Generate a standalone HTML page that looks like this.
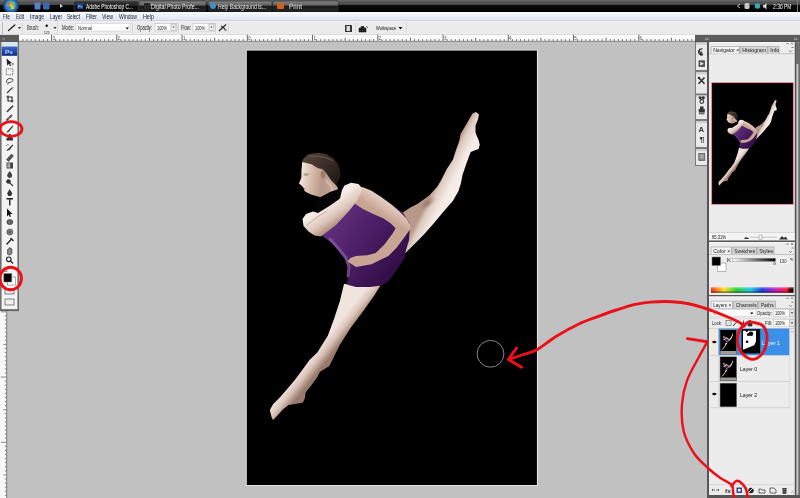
<!DOCTYPE html>
<html><head><meta charset="utf-8"><style>html,body{margin:0;padding:0;width:800px;height:498px;overflow:hidden;background:#c1c1c1}</style></head>
<body><svg width="800" height="498" viewBox="0 0 800 498" font-family="'Liberation Sans', sans-serif" style="position:absolute;left:0;top:0;display:block;will-change:transform;filter:blur(0.4px)"><defs>
<linearGradient id="gLegU" gradientUnits="userSpaceOnUse" x1="449" y1="157.5" x2="462.5" y2="164.3">
<stop offset="0" stop-color="#b8988a"/><stop offset="0.3" stop-color="#dccabe"/><stop offset="0.7" stop-color="#ecdfd8"/><stop offset="1" stop-color="#f6ede8"/>
</linearGradient>
<linearGradient id="gLegL" gradientUnits="userSpaceOnUse" x1="327.8" y1="335.8" x2="339.5" y2="345.2">
<stop offset="0" stop-color="#f0e4de"/><stop offset="0.45" stop-color="#dcc6bc"/><stop offset="1" stop-color="#9a7a6c"/>
</linearGradient>
<linearGradient id="gPur" gradientUnits="userSpaceOnUse" x1="330" y1="220" x2="400" y2="270">
<stop offset="0" stop-color="#62307e"/><stop offset="0.45" stop-color="#4c1e66"/><stop offset="1" stop-color="#300c44"/>
</linearGradient>
<linearGradient id="gArm" gradientUnits="userSpaceOnUse" x1="322" y1="208" x2="336" y2="228">
<stop offset="0" stop-color="#f6ece6"/><stop offset="0.55" stop-color="#dcc4b8"/><stop offset="1" stop-color="#a8806e"/>
</linearGradient>
<linearGradient id="gArmR" gradientUnits="userSpaceOnUse" x1="360" y1="200" x2="370" y2="185">
<stop offset="0" stop-color="#c8a494"/><stop offset="1" stop-color="#ecdcd2"/>
</linearGradient>
<linearGradient id="gHair" gradientUnits="userSpaceOnUse" x1="305" y1="155" x2="340" y2="180">
<stop offset="0" stop-color="#54443a"/><stop offset="0.5" stop-color="#3c2e28"/><stop offset="1" stop-color="#201814"/>
</linearGradient>
<linearGradient id="gFace" gradientUnits="userSpaceOnUse" x1="300" y1="175" x2="338" y2="180">
<stop offset="0" stop-color="#f4e8e0"/><stop offset="0.3" stop-color="#d8bcac"/><stop offset="0.6" stop-color="#b89888"/><stop offset="1" stop-color="#c8aa9a"/>
</linearGradient>
<radialGradient id="gShade" cx="0.5" cy="0.5" r="0.5"><stop offset="0" stop-color="#7a5040" stop-opacity="0.55"/><stop offset="1" stop-color="#7a5040" stop-opacity="0"/></radialGradient>
<radialGradient id="gHi" cx="0.5" cy="0.5" r="0.5"><stop offset="0" stop-color="#9a6ab8" stop-opacity="0.7"/><stop offset="1" stop-color="#9a6ab8" stop-opacity="0"/></radialGradient>
<g id="dancer">
<!-- raised leg -->
<path fill="url(#gLegU)" d="M476,112 L479,114.5 L478,119.5 L475.5,125.5 L475.5,132.7 L478.6,140 L479.8,144.8 L478.6,149 L475,150.2 L470.7,152 L468.9,156.8 L465.9,165 L462.5,175 L461,183 L458.5,191 L452.8,200.9 L443.2,212.1 L433.6,223.4 L423.9,234.6 L414.3,244.3 L406.2,252.3 L401.4,255.5 L396,250 L392,232 L396,216 L402.8,212.5 L410,207.7 L417.7,203.8 L428.9,195.8 L437,187 L441,180.5 L446.6,169.3 L453,159.6 L456,150 L459.3,141.1 L460.5,133.9 L464.1,127.9 L468.3,120.7 L472.5,113.4 Z"/>
<ellipse cx="428" cy="203" rx="10" ry="4.5" transform="rotate(-40 428 203)" fill="url(#gShade)"/>
<!-- lower leg -->
<path fill="url(#gLegL)" d="M344,284 L339.9,301.1 L333.9,319.2 L327.8,335.8 L317.3,352.4 L309.5,360 L303,369.1 L295.2,379.6 L287.4,388.7 L279.6,397.8 L273,404.3 L269.8,410.2 L271.7,417.4 L273,420 L277,416 L282.8,409.5 L288.7,405 L296.5,403.7 L303,402.4 L305,397.8 L305.6,392.6 L310.8,386.1 L317.4,377 L320,371.7 L329.3,365.9 L339.9,344.8 L350.4,328.2 L364,310.1 L374.6,295.1 L381.3,284 Z"/>
<!-- torso purple -->
<path fill="url(#gPur)" d="M322,212 L336.5,197.9 L345,192 L357,189 L372,192 L390.8,204.1 L402.8,212.5 L410,224 L409,240 L405.2,253.1 L405.2,257.3 L396.8,270 L388.4,281.2 L381.3,285.4 L370.1,287 L356,287 L346.5,284.5 L349,276 L350,268 L347,262 L343,256 L338,250 L332,243 L323,236.5 L318,225 Z"/>
<path d="M330,239 L339,249 L346,258 L349,267 L348,276" stroke="#8a58a6" stroke-width="3" fill="none" opacity="0.75" stroke-linecap="round"/>
<!-- hair -->
<path fill="url(#gHair)" d="M302.2,162.5 L302.7,159.5 L308,154.6 L317.7,152.8 L326,154 L333.4,158.3 L338.2,164.3 L340.6,172.7 L339.4,180 L335.8,185 L331,180 L326,172.7 L322.5,169.1 L317.7,167.9 L311.7,164.3 Z"/>
<path d="M310,156.5 Q322,154.5 333,161" fill="none" stroke="#7a6a60" stroke-width="1.3" opacity="0.55"/>
<!-- face/neck -->
<path fill="url(#gFace)" d="M302.2,162 L311.7,164.3 L317.7,167.9 L322.5,169.1 L326,172.7 L331,180 L335.8,185 L337.6,187.2 L338.2,192 L322.5,198 L319,196.8 L311,194.4 L306.9,192.6 L304.5,191 L303.9,188.4 L302,186 L299,183.5 L301.4,177.5 L301.4,171.5 Z"/>
<ellipse cx="323" cy="174.5" rx="2.3" ry="4.3" fill="#9a7464" opacity="0.75"/>
<ellipse cx="306" cy="174.5" rx="2.6" ry="1.2" fill="#7a5a4a" opacity="0.5"/>
<path d="M303.8,188.6 h2" stroke="#9a6a60" stroke-width="0.9" opacity="0.6"/>
<path d="M326,180 L331,186 L333,192" fill="none" stroke="#e6d2c6" stroke-width="3" opacity="0.45"/>
<!-- right arm (bent, hand on hip) -->
<path fill="url(#gArmR)" d="M354.6,187.2 L363,187.2 L371.5,190.8 L381.1,196.9 L390.8,204.1 L399.2,211.3 L406.4,218.6 L410,224.6 L410.7,228.2 L405.2,236.2 L396.8,247.5 L388.4,255.9 L380,260.1 L371.5,264.3 L356,267.1 L347.6,261.5 L350.4,258 L356,255.9 L367.3,255.2 L375.7,253.1 L384.2,244.7 L392.6,233.4 L395.6,228.2 L390.8,223.4 L383.6,218.6 L372.7,213.7 L363,208.9 L355.2,204.1 Z"/>
<!-- collar -->
<path fill="#060406" d="M317,199 L330,192 L340,188.5 L347,190 L346,196 L331,205.5 L318,213.5 L313,207 Z"/>
<!-- left arm -->
<path fill="url(#gArm)" d="M321,236.5 L336,225 L349,211 L357,201 L361,193 L362,188 L358.5,184 L351,182.8 L344.5,185.5 L342,190 L340,198.5 L331,205 L318,213 L313,211.5 L306,214 L302.5,219 L303.5,226 L308.5,231.5 L314.5,235.5 Z"/>
<path d="M306,226 L316,218 L327,211" stroke="#b08878" stroke-width="1" fill="none" opacity="0.6"/>
</g>
</defs>
<rect x="0" y="0" width="800" height="498" fill="#c1c1c1" />
<linearGradient id="gTask" x1="0" y1="0" x2="0" y2="1"><stop offset="0" stop-color="#6c6c6c"/><stop offset="0.12" stop-color="#5a5a5a"/><stop offset="0.42" stop-color="#444"/><stop offset="0.46" stop-color="#0a0a0a"/><stop offset="1" stop-color="#000"/></linearGradient>
<linearGradient id="gBtn" x1="0" y1="0" x2="0" y2="1"><stop offset="0" stop-color="#8a8a8a"/><stop offset="0.4" stop-color="#5e5e5e"/><stop offset="0.5" stop-color="#1a1a1a"/><stop offset="1" stop-color="#262626"/></linearGradient>
<linearGradient id="gAct" x1="0" y1="0" x2="0" y2="1"><stop offset="0" stop-color="#3a3a3a"/><stop offset="0.45" stop-color="#222"/><stop offset="0.5" stop-color="#0c0c0c"/><stop offset="1" stop-color="#111"/></linearGradient>
<rect x="0" y="0" width="800" height="12" fill="url(#gTask)" />
<radialGradient id="gOrb" cx="0.5" cy="0.45" r="0.55"><stop offset="0" stop-color="#f3f3f3"/><stop offset="0.25" stop-color="#8fc850"/><stop offset="0.5" stop-color="#3a8fd8"/><stop offset="0.8" stop-color="#1c4c80"/><stop offset="1" stop-color="#0a1a30"/></radialGradient>
<circle cx="11" cy="6" r="8" fill="url(#gOrb)"/>
<rect x="7.5" y="2.5" width="3" height="3" fill="#e8682a"/><rect x="11.1" y="2.5" width="3" height="3" fill="#7cc040"/><rect x="7.5" y="6.1" width="3" height="3" fill="#2a90e0"/><rect x="11.1" y="6.1" width="3" height="3" fill="#f0c020"/>
<rect x="34.5" y="2.5" width="6" height="7" fill="#5a80c8" rx="1"/>
<rect x="43" y="2.5" width="6.5" height="7" fill="#3c68b0" rx="1"/>
<path d="M60,4 L63,6 L60,8 Z" fill="#ccc"/>
<rect x="74" y="1" width="64.5" height="10.5" rx="1.5" fill="url(#gAct)" stroke="#555" stroke-width="0.6"/>
<rect x="139" y="1" width="67" height="10.5" rx="1.5" fill="url(#gBtn)" stroke="#222" stroke-width="0.6"/>
<rect x="208" y="1" width="64" height="10.5" rx="1.5" fill="url(#gBtn)" stroke="#222" stroke-width="0.6"/>
<rect x="272.5" y="1" width="66" height="10.5" rx="1.5" fill="url(#gBtn)" stroke="#222" stroke-width="0.6"/>
<rect x="77" y="3" width="6" height="6" fill="#1b3f8f" />
<text x="78.2" y="7.6" font-size="3.6" fill="#9cc8ff" font-weight="bold" text-anchor="start">Ps</text>
<rect x="144" y="3" width="6" height="6" fill="#2a2a2a" />
<circle cx="213" cy="6" r="3" fill="#3a90d0"/>
<rect x="277" y="3" width="7" height="6" fill="#d0601e" rx="1"/>
<text x="86" y="8.6" font-size="6.3" fill="#fff" font-weight="normal" text-anchor="start" textLength="47" lengthAdjust="spacingAndGlyphs">Adobe Photoshop C...</text>
<text x="151" y="8.6" font-size="6.3" fill="#eee" font-weight="normal" text-anchor="start" textLength="48" lengthAdjust="spacingAndGlyphs">Digital Photo Profe...</text>
<text x="218" y="8.6" font-size="6.3" fill="#eee" font-weight="normal" text-anchor="start" textLength="48" lengthAdjust="spacingAndGlyphs">Help Background is...</text>
<text x="289" y="8.6" font-size="6.3" fill="#eee" font-weight="normal" text-anchor="start" textLength="13" lengthAdjust="spacingAndGlyphs">Print</text>
<path d="M740,4 L737.5,6 L740,8" stroke="#ddd" stroke-width="0.9" fill="none"/>
<rect x="744.5" y="3" width="5" height="6" fill="#c8c8c8" rx="1.5"/>
<circle cx="757.5" cy="6" r="2.8" fill="#3aa8b0"/>
<path d="M763,5 h1.5 l2,-2 v6.5 l-2,-2 h-1.5 Z" fill="#ddd"/>
<text x="773" y="8.6" font-size="6.3" fill="#f4f4f4" font-weight="normal" text-anchor="start" textLength="18.5" lengthAdjust="spacingAndGlyphs">2:36 PM</text>
<rect x="797" y="0" width="1" height="12" fill="#777" />
<linearGradient id="gMenu" x1="0" y1="0" x2="0" y2="1"><stop offset="0" stop-color="#fafbfd"/><stop offset="1" stop-color="#dde2ee"/></linearGradient>
<rect x="0" y="12" width="800" height="8.8" fill="url(#gMenu)" />
<rect x="0" y="20.6" width="800" height="0.6" fill="#c4cadb" />
<text x="3" y="19" font-size="7" fill="#1a1a2a" font-weight="normal" text-anchor="start" textLength="7" lengthAdjust="spacingAndGlyphs">File</text>
<text x="16" y="19" font-size="7" fill="#1a1a2a" font-weight="normal" text-anchor="start" textLength="8" lengthAdjust="spacingAndGlyphs">Edit</text>
<text x="30" y="19" font-size="7" fill="#1a1a2a" font-weight="normal" text-anchor="start" textLength="14" lengthAdjust="spacingAndGlyphs">Image</text>
<text x="50" y="19" font-size="7" fill="#1a1a2a" font-weight="normal" text-anchor="start" textLength="12" lengthAdjust="spacingAndGlyphs">Layer</text>
<text x="67" y="19" font-size="7" fill="#1a1a2a" font-weight="normal" text-anchor="start" textLength="13" lengthAdjust="spacingAndGlyphs">Select</text>
<text x="86" y="19" font-size="7" fill="#1a1a2a" font-weight="normal" text-anchor="start" textLength="11" lengthAdjust="spacingAndGlyphs">Filter</text>
<text x="102" y="19" font-size="7" fill="#1a1a2a" font-weight="normal" text-anchor="start" textLength="11" lengthAdjust="spacingAndGlyphs">View</text>
<text x="119" y="19" font-size="7" fill="#1a1a2a" font-weight="normal" text-anchor="start" textLength="18" lengthAdjust="spacingAndGlyphs">Window</text>
<text x="143" y="19" font-size="7" fill="#1a1a2a" font-weight="normal" text-anchor="start" textLength="11" lengthAdjust="spacingAndGlyphs">Help</text>
<rect x="0" y="21.2" width="800" height="13.3" fill="#ebebeb" />
<rect x="0" y="21.2" width="800" height="0.6" fill="#fbfbfb" />
<rect x="2" y="22" width="1" height="12" fill="#b8b8b8" />
<rect x="22.5" y="22.5" width="0.8" height="11" fill="#c4c4c4" />
<rect x="23.3" y="22.5" width="0.6" height="11" fill="#fafafa" />
<rect x="57.5" y="22.5" width="0.8" height="11" fill="#c4c4c4" />
<rect x="58.3" y="22.5" width="0.6" height="11" fill="#fafafa" />
<rect x="132.5" y="22.5" width="0.8" height="11" fill="#c4c4c4" />
<rect x="133.3" y="22.5" width="0.6" height="11" fill="#fafafa" />
<rect x="178.5" y="22.5" width="0.8" height="11" fill="#c4c4c4" />
<rect x="179.3" y="22.5" width="0.6" height="11" fill="#fafafa" />
<rect x="215.5" y="22.5" width="0.8" height="11" fill="#c4c4c4" />
<rect x="216.3" y="22.5" width="0.6" height="11" fill="#fafafa" />
<rect x="228.5" y="22.5" width="0.8" height="11" fill="#c4c4c4" />
<rect x="229.3" y="22.5" width="0.6" height="11" fill="#fafafa" />
<rect x="355.5" y="22.5" width="0.8" height="11" fill="#c4c4c4" />
<rect x="356.3" y="22.5" width="0.6" height="11" fill="#fafafa" />
<rect x="406.5" y="22.5" width="0.8" height="11" fill="#c4c4c4" />
<rect x="407.3" y="22.5" width="0.6" height="11" fill="#fafafa" />
<path d="M8.5,30.5 L14.8,25" stroke="#222" stroke-width="1.3" stroke-linecap="round"/>
<path d="M18,27 h3 l-1.5,2 Z" fill="#222"/>
<text x="27" y="30" font-size="6.3" fill="#1a1a1a" font-weight="normal" text-anchor="start" textLength="12" lengthAdjust="spacingAndGlyphs">Brush:</text>
<circle cx="46.7" cy="25.8" r="1.2" fill="#111"/>
<text x="44" y="33.6" font-size="3.8" fill="#111" font-weight="normal" text-anchor="start" textLength="5.5" lengthAdjust="spacingAndGlyphs">125</text>
<path d="M53.5,27 h3 l-1.5,2 Z" fill="#222"/>
<text x="62" y="30" font-size="6.3" fill="#1a1a1a" font-weight="normal" text-anchor="start" textLength="12" lengthAdjust="spacingAndGlyphs">Mode:</text>
<rect x="76" y="23.5" width="54" height="7.5" fill="#fdfdfd" stroke="#c8c8c8" stroke-width="0.5"/>
<text x="78" y="29.5" font-size="5" fill="#1a1a1a" font-weight="normal" text-anchor="start" textLength="14" lengthAdjust="spacingAndGlyphs">Normal</text>
<path d="M125.5,27.5 h3.5 l-1.75,2 Z" fill="#111"/>
<text x="137" y="30" font-size="6.3" fill="#1a1a1a" font-weight="normal" text-anchor="start" textLength="15" lengthAdjust="spacingAndGlyphs">Opacity:</text>
<rect x="155" y="23.5" width="22" height="7.5" fill="#fdfdfd" stroke="#b8b8b8" stroke-width="0.5"/>
<text x="157" y="29.5" font-size="5" fill="#1a1a1a" font-weight="normal" text-anchor="start" textLength="10" lengthAdjust="spacingAndGlyphs">100%</text>
<rect x="171" y="24" width="5" height="6.5" fill="#f0f0f0" stroke="#999" stroke-width="0.5"/>
<path d="M172.5,26.5 h2 l-1,1.5 Z" fill="#333"/>
<text x="181" y="30" font-size="6.3" fill="#1a1a1a" font-weight="normal" text-anchor="start" textLength="10" lengthAdjust="spacingAndGlyphs">Flow:</text>
<rect x="193" y="23.5" width="22" height="7.5" fill="#fdfdfd" stroke="#b8b8b8" stroke-width="0.5"/>
<text x="195" y="29.5" font-size="5" fill="#1a1a1a" font-weight="normal" text-anchor="start" textLength="10" lengthAdjust="spacingAndGlyphs">100%</text>
<rect x="209" y="24" width="5" height="6.5" fill="#f0f0f0" stroke="#999" stroke-width="0.5"/>
<path d="M210.5,26.5 h2 l-1,1.5 Z" fill="#333"/>
<path d="M219,31 L226,24.5 M221,26 l4,3 M224.5,30 l2,0" stroke="#222" stroke-width="1.1"/>
<rect x="345" y="25" width="7" height="7" fill="#333" rx="0.5"/>
<rect x="346.5" y="26" width="3.5" height="5" fill="#ddd" />
<path d="M359,28 h7 v4 h-7 Z M361,26.5 h3 v1.5 h-3 Z M366,26 l2,2" fill="#222" stroke="#222" stroke-width="0.6"/>
<text x="376" y="30" font-size="5.6" fill="#111" font-weight="normal" text-anchor="start" textLength="20" lengthAdjust="spacingAndGlyphs">Workspace</text>
<path d="M398.5,27 h4 l-2,2.5 Z" fill="#111"/>
<rect x="19" y="34.8" width="676" height="6.6" fill="#fbfbfb" />
<rect x="19" y="40.8" width="676" height="0.9" fill="#777" />
<path d="M23.00,39.199999999999996V40.8M27.08,39.199999999999996V40.8M31.16,39.199999999999996V40.8M35.24,39.199999999999996V40.8M39.32,39.199999999999996V40.8M43.39,39.199999999999996V40.8M47.47,39.199999999999996V40.8M51.55,34.8V40.8M55.63,39.199999999999996V40.8M59.71,39.199999999999996V40.8M63.78,39.199999999999996V40.8M67.86,39.199999999999996V40.8M71.94,39.199999999999996V40.8M76.02,39.199999999999996V40.8M80.10,39.199999999999996V40.8M84.18,37.8V40.8M88.25,39.199999999999996V40.8M92.33,39.199999999999996V40.8M96.41,39.199999999999996V40.8M100.49,39.199999999999996V40.8M104.57,39.199999999999996V40.8M108.64,39.199999999999996V40.8M112.72,39.199999999999996V40.8M116.80,34.8V40.8M120.88,39.199999999999996V40.8M124.96,39.199999999999996V40.8M129.03,39.199999999999996V40.8M133.11,39.199999999999996V40.8M137.19,39.199999999999996V40.8M141.27,39.199999999999996V40.8M145.35,39.199999999999996V40.8M149.43,37.8V40.8M153.50,39.199999999999996V40.8M157.58,39.199999999999996V40.8M161.66,39.199999999999996V40.8M165.74,39.199999999999996V40.8M169.82,39.199999999999996V40.8M173.89,39.199999999999996V40.8M177.97,39.199999999999996V40.8M182.05,34.8V40.8M186.13,39.199999999999996V40.8M190.21,39.199999999999996V40.8M194.28,39.199999999999996V40.8M198.36,39.199999999999996V40.8M202.44,39.199999999999996V40.8M206.52,39.199999999999996V40.8M210.60,39.199999999999996V40.8M214.68,37.8V40.8M218.75,39.199999999999996V40.8M222.83,39.199999999999996V40.8M226.91,39.199999999999996V40.8M230.99,39.199999999999996V40.8M235.07,39.199999999999996V40.8M239.14,39.199999999999996V40.8M243.22,39.199999999999996V40.8M247.30,34.8V40.8M251.38,39.199999999999996V40.8M255.46,39.199999999999996V40.8M259.53,39.199999999999996V40.8M263.61,39.199999999999996V40.8M267.69,39.199999999999996V40.8M271.77,39.199999999999996V40.8M275.85,39.199999999999996V40.8M279.93,37.8V40.8M284.00,39.199999999999996V40.8M288.08,39.199999999999996V40.8M292.16,39.199999999999996V40.8M296.24,39.199999999999996V40.8M300.32,39.199999999999996V40.8M304.39,39.199999999999996V40.8M308.47,39.199999999999996V40.8M312.55,34.8V40.8M316.63,39.199999999999996V40.8M320.71,39.199999999999996V40.8M324.78,39.199999999999996V40.8M328.86,39.199999999999996V40.8M332.94,39.199999999999996V40.8M337.02,39.199999999999996V40.8M341.10,39.199999999999996V40.8M345.18,37.8V40.8M349.25,39.199999999999996V40.8M353.33,39.199999999999996V40.8M357.41,39.199999999999996V40.8M361.49,39.199999999999996V40.8M365.57,39.199999999999996V40.8M369.64,39.199999999999996V40.8M373.72,39.199999999999996V40.8M377.80,34.8V40.8M381.88,39.199999999999996V40.8M385.96,39.199999999999996V40.8M390.03,39.199999999999996V40.8M394.11,39.199999999999996V40.8M398.19,39.199999999999996V40.8M402.27,39.199999999999996V40.8M406.35,39.199999999999996V40.8M410.43,37.8V40.8M414.50,39.199999999999996V40.8M418.58,39.199999999999996V40.8M422.66,39.199999999999996V40.8M426.74,39.199999999999996V40.8M430.82,39.199999999999996V40.8M434.89,39.199999999999996V40.8M438.97,39.199999999999996V40.8M443.05,34.8V40.8M447.13,39.199999999999996V40.8M451.21,39.199999999999996V40.8M455.28,39.199999999999996V40.8M459.36,39.199999999999996V40.8M463.44,39.199999999999996V40.8M467.52,39.199999999999996V40.8M471.60,39.199999999999996V40.8M475.68,37.8V40.8M479.75,39.199999999999996V40.8M483.83,39.199999999999996V40.8M487.91,39.199999999999996V40.8M491.99,39.199999999999996V40.8M496.07,39.199999999999996V40.8M500.14,39.199999999999996V40.8M504.22,39.199999999999996V40.8M508.30,34.8V40.8M512.38,39.199999999999996V40.8M516.46,39.199999999999996V40.8M520.53,39.199999999999996V40.8M524.61,39.199999999999996V40.8M528.69,39.199999999999996V40.8M532.77,39.199999999999996V40.8M536.85,39.199999999999996V40.8M540.92,37.8V40.8M545.00,39.199999999999996V40.8M549.08,39.199999999999996V40.8M553.16,39.199999999999996V40.8M557.24,39.199999999999996V40.8M561.32,39.199999999999996V40.8M565.39,39.199999999999996V40.8M569.47,39.199999999999996V40.8M573.55,34.8V40.8M577.63,39.199999999999996V40.8M581.71,39.199999999999996V40.8M585.78,39.199999999999996V40.8M589.86,39.199999999999996V40.8M593.94,39.199999999999996V40.8M598.02,39.199999999999996V40.8M602.10,39.199999999999996V40.8M606.17,37.8V40.8M610.25,39.199999999999996V40.8M614.33,39.199999999999996V40.8M618.41,39.199999999999996V40.8M622.49,39.199999999999996V40.8M626.57,39.199999999999996V40.8M630.64,39.199999999999996V40.8M634.72,39.199999999999996V40.8M638.80,34.8V40.8M642.88,39.199999999999996V40.8M646.96,39.199999999999996V40.8M651.03,39.199999999999996V40.8M655.11,39.199999999999996V40.8M659.19,39.199999999999996V40.8M663.27,39.199999999999996V40.8M667.35,39.199999999999996V40.8M671.42,37.8V40.8M675.50,39.199999999999996V40.8M679.58,39.199999999999996V40.8M683.66,39.199999999999996V40.8M687.74,39.199999999999996V40.8M691.82,39.199999999999996V40.8" stroke="#555" stroke-width="0.9"/>
<text x="52.4" y="39.6" font-size="4.6" fill="#555" font-weight="normal" text-anchor="start">3</text>
<text x="117.6" y="39.6" font-size="4.6" fill="#555" font-weight="normal" text-anchor="start">2</text>
<text x="182.9" y="39.6" font-size="4.6" fill="#555" font-weight="normal" text-anchor="start">1</text>
<text x="248.1" y="39.6" font-size="4.6" fill="#555" font-weight="normal" text-anchor="start">0</text>
<text x="313.4" y="39.6" font-size="4.6" fill="#555" font-weight="normal" text-anchor="start">1</text>
<text x="378.6" y="39.6" font-size="4.6" fill="#555" font-weight="normal" text-anchor="start">2</text>
<text x="443.9" y="39.6" font-size="4.6" fill="#555" font-weight="normal" text-anchor="start">3</text>
<text x="509.1" y="39.6" font-size="4.6" fill="#555" font-weight="normal" text-anchor="start">4</text>
<text x="574.3" y="39.6" font-size="4.6" fill="#555" font-weight="normal" text-anchor="start">5</text>
<text x="639.6" y="39.6" font-size="4.6" fill="#555" font-weight="normal" text-anchor="start">6</text>
<rect x="246.3" y="50.1" width="291.1" height="435.4" fill="none" stroke="#e6e6e6" stroke-width="1"/>
<rect x="246.8" y="50.6" width="290.1" height="434.4" fill="#000" />
<svg x="246.8" y="50.6" width="290.1" height="434.4" viewBox="246.8 50.6 290.1 434.4"><use href="#dancer"/></svg>
<circle cx="490.5" cy="353.8" r="13.4" fill="none" stroke="#858585" stroke-width="1"/>
<rect x="0" y="35" width="19" height="275" fill="#6e6e6e" />
<rect x="0" y="35" width="19" height="7" fill="#5a5a5a" />
<path d="M2,38.5 h3 M2,39.8 h3" stroke="#aaa" stroke-width="0.5"/>
<rect x="1.6" y="42" width="15.8" height="267.5" fill="#f4f4f4" />
<rect x="1.6" y="42" width="15.8" height="4.5" fill="#dfe6ea" />
<linearGradient id="gPs" x1="0" y1="0" x2="0" y2="1"><stop offset="0" stop-color="#3a6ad0"/><stop offset="1" stop-color="#0c2c80"/></linearGradient>
<rect x="1.8" y="46.5" width="15.4" height="9.3" fill="url(#gPs)" />
<text x="5" y="53.8" font-size="6.2" fill="#b8d8ff" font-weight="bold" text-anchor="start" textLength="8" lengthAdjust="spacingAndGlyphs">Ps</text>
<path d="M6.5,58.5 L12,63 L9.8,63.4 L11.2,65.8 L10.2,66.3 L8.9,64 L7.2,65.5 Z" fill="#222"/><path d="M11.5,64 h2.5 M12.75,62.75 v2.5" stroke="#444" stroke-width="0.6"/><rect x="6.3" y="68.8" width="6.6" height="6" fill="none" stroke="#3a3a3a" stroke-width="0.8" stroke-dasharray="1,0.8"/><path d="M7,83 q-1.5,-4 3,-4.5 q3.5,0 3,2 q-1,2 -4.5,2 l-0.8,2.2" fill="none" stroke="#3a3a3a" stroke-width="0.9"/><path d="M7,93 L12,88" stroke="#3a3a3a" stroke-width="1.1"/><path d="M12,86.5 l0.5,1 l1,0.2 l-0.8,0.7 l0.3,1" stroke="#666" stroke-width="0.6" fill="none"/><path d="M8,95.5 v5.5 h5.5 M6.5,97 h5.5 v5.5" fill="none" stroke="#222" stroke-width="1.1"/><path d="M6.5,111.5 L12.5,105.5 l0.8,0.8 L7.5,112" fill="#444" stroke="#3a3a3a" stroke-width="0.7"/><path d="M6.5,120.5 L12,115" stroke="#555" stroke-width="2"/><path d="M8.5,118 l1,1" stroke="#ddd" stroke-width="0.6"/><path d="M6.5,132.5 q0.5,-2 2,-2.5 L12.5,125.5 l0.8,0.8 L9.5,131 q-1,1.5 -3,1.5 Z" fill="#333"/><path d="M7.5,136 h4.5 v2 h1 v2.5 h-6.5 v-2.5 h1 Z M8.8,134 h2 v2 h-2 Z" fill="#333"/><path d="M6.5,151 q0.5,-2 2,-2.5 L12.5,144.5 l0.8,0.8 L9.5,150 Z" fill="#333"/><path d="M6,146 q1,-2 3,-1" stroke="#555" stroke-width="0.7" fill="none"/><path d="M6.5,159.5 L11.5,154 L13.5,156 L8.5,161.5 Z" fill="#555" stroke="#333" stroke-width="0.5"/><rect x="6.5" y="162.5" width="6.5" height="6" fill="#444"/><rect x="7.3" y="163.3" width="3" height="4.4" fill="#aaa"/><path d="M9.7,171 q-3,3.5 -2.5,5 a2.6,2.6 0 0,0 5,0 q0.5,-1.5 -2.5,-5 Z" fill="#444"/><circle cx="8.5" cy="181.5" r="2.3" fill="#333"/><path d="M10,183 L13,186" stroke="#333" stroke-width="1.1"/><path d="M9.7,189 L12.3,193.5 L11,196 h-2.6 L7.1,193.5 Z" fill="#333"/><path d="M6.5,198.8 h6.5 M9.75,198.8 v6.8" stroke="#222" stroke-width="1.4"/><path d="M7,208.5 L12.5,214 L10,214.3 L11,216.5 L9.8,217 L8.8,214.8 L7,216.5 Z" fill="#111"/><ellipse cx="9.8" cy="222" rx="3" ry="2.6" fill="#666" stroke="#333" stroke-width="0.6"/><circle cx="9.8" cy="232" r="3" fill="#888" stroke="#444" stroke-width="0.7"/><circle cx="9.8" cy="232" r="1.3" fill="#555"/><path d="M6.5,244.5 L11.5,239 M10.5,238 l3,3" stroke="#222" stroke-width="1.3"/><path d="M7.5,254 v-4.5 q0.8,-1 1.5,0 v-1.5 q0.8,-1 1.5,0 v1 q0.8,-1 1.5,0 v4 q-0.5,2 -2.5,2 h-1 Z" fill="#888" stroke="#333" stroke-width="0.6"/><circle cx="8.8" cy="259.3" r="2.3" fill="none" stroke="#222" stroke-width="1.1"/><path d="M10.5,261 L13,263.5" stroke="#222" stroke-width="1.3"/>
<rect x="7.5" y="277" width="8" height="8" fill="#fff" stroke="#777" stroke-width="0.6"/>
<rect x="3.8" y="273.5" width="8" height="8.5" fill="#000" stroke="#888" stroke-width="0.6"/>
<rect x="4" y="268.5" width="3" height="3" fill="none" stroke="#555" stroke-width="0.6"/>
<rect x="5" y="289" width="9" height="5" fill="#eaeaea" stroke="#555" stroke-width="0.7"/>
<rect x="5" y="299" width="9" height="6" fill="#f0f0f0" stroke="#555" stroke-width="0.7"/>
<rect x="0" y="309.3" width="19" height="1.8" fill="#666" />
<rect x="0" y="311" width="6.6" height="188" fill="#f8f8f8" />
<rect x="6.3" y="311" width="0.9" height="188" fill="#777" />
<path d="M0.9000000000000004,311.80H6.4M4.800000000000001,315.88H6.4M4.800000000000001,319.96H6.4M4.800000000000001,324.03H6.4M4.800000000000001,328.11H6.4M4.800000000000001,332.19H6.4M4.800000000000001,336.27H6.4M4.800000000000001,340.35H6.4M3.4000000000000004,344.43H6.4M4.800000000000001,348.50H6.4M4.800000000000001,352.58H6.4M4.800000000000001,356.66H6.4M4.800000000000001,360.74H6.4M4.800000000000001,364.82H6.4M4.800000000000001,368.89H6.4M4.800000000000001,372.97H6.4M0.9000000000000004,377.05H6.4M4.800000000000001,381.13H6.4M4.800000000000001,385.21H6.4M4.800000000000001,389.28H6.4M4.800000000000001,393.36H6.4M4.800000000000001,397.44H6.4M4.800000000000001,401.52H6.4M4.800000000000001,405.60H6.4M3.4000000000000004,409.68H6.4M4.800000000000001,413.75H6.4M4.800000000000001,417.83H6.4M4.800000000000001,421.91H6.4M4.800000000000001,425.99H6.4M4.800000000000001,430.07H6.4M4.800000000000001,434.14H6.4M4.800000000000001,438.22H6.4M0.9000000000000004,442.30H6.4M4.800000000000001,446.38H6.4M4.800000000000001,450.46H6.4M4.800000000000001,454.53H6.4M4.800000000000001,458.61H6.4M4.800000000000001,462.69H6.4M4.800000000000001,466.77H6.4M4.800000000000001,470.85H6.4M3.4000000000000004,474.93H6.4M4.800000000000001,479.00H6.4M4.800000000000001,483.08H6.4M4.800000000000001,487.16H6.4M4.800000000000001,491.24H6.4M4.800000000000001,495.32H6.4" stroke="#6a6a6a" stroke-width="0.8"/>
<rect x="690" y="42" width="18" height="456" fill="#c1c1c1" />
<rect x="695" y="35" width="105" height="7" fill="#5c5c5c" />
<rect x="695" y="41.5" width="105" height="0.7" fill="#444" />
<path d="M705,38 l1.5,1 l-1.5,1 M707,38 l1.5,1 l-1.5,1 M794,38 l1.5,1 l-1.5,1 M796,38 l1.5,1 l-1.5,1" stroke="#ccc" stroke-width="0.6" fill="none"/>
<rect x="695" y="42" width="13" height="124" fill="#7a7a7a" />
<rect x="696" y="42.5" width="11.5" height="27.5" fill="#e9e9e9" />
<rect x="696" y="42.5" width="11.5" height="2.2" fill="#cfcfcf" />
<rect x="696" y="72" width="11.5" height="21.5" fill="#e9e9e9" />
<rect x="696" y="72" width="11.5" height="2.2" fill="#cfcfcf" />
<rect x="696" y="95.5" width="11.5" height="23.5" fill="#e9e9e9" />
<rect x="696" y="95.5" width="11.5" height="2.2" fill="#cfcfcf" />
<rect x="696" y="121" width="11.5" height="26" fill="#e9e9e9" />
<rect x="696" y="121" width="11.5" height="2.2" fill="#cfcfcf" />
<rect x="696" y="149" width="11.5" height="16" fill="#e9e9e9" />
<rect x="696" y="149" width="11.5" height="2.2" fill="#cfcfcf" />
<path d="M702.5,49 a3,3 0 1,0 0.5,5.5" fill="none" stroke="#333" stroke-width="1.3"/><path d="M699.5,49 v3 h2.5" fill="none" stroke="#333" stroke-width="1"/><rect x="700" y="52.5" width="2.5" height="3" fill="#333"/>
<rect x="698.5" y="60.3" width="6.5" height="6.8" rx="0.8" fill="#555"/><path d="M700.3,61.8 L703.8,63.7 L700.3,65.6 Z" fill="#eee"/>
<path d="M698.5,77.5 L704.5,83.8 M704.5,77.5 L698.5,83.8" stroke="#333" stroke-width="1.6"/><circle cx="699" cy="78" r="1.3" fill="#333"/>
<circle cx="700.2" cy="97.8" r="1.5" fill="#333"/><circle cx="703.3" cy="97.8" r="1.5" fill="#333"/><circle cx="701.8" cy="101.5" r="1.9" fill="none" stroke="#333" stroke-width="1.1"/>
<path d="M700,106.5 h3.5 v2.5 h1.3 v3.5 h-6.1 v-3.5 h1.3 Z" fill="#333"/><rect x="699" y="112.8" width="5.5" height="1.5" fill="#666"/>
<text x="698.6" y="132.3" font-size="7.2" fill="#333" font-weight="bold" text-anchor="start" textLength="5.6" lengthAdjust="spacingAndGlyphs">A</text>
<text x="699.4" y="141.8" font-size="7" fill="#333" font-weight="bold" text-anchor="start" textLength="5" lengthAdjust="spacingAndGlyphs">¶</text>
<rect x="698.8" y="153.5" width="6" height="7" fill="#888" stroke="#444" stroke-width="0.6"/><path d="M699.8,155.5 h4 M699.8,157.5 h4" stroke="#ddd" stroke-width="0.6"/>
<rect x="707" y="42" width="2" height="456" fill="#565656" />
<rect x="795" y="42" width="5" height="456" fill="#6c6c6c" />
<rect x="794.6" y="42" width="1.2" height="456" fill="#505050" />
<rect x="796.5" y="64" width="1.8" height="434" fill="#cdcdcd" />
<rect x="795.8" y="42" width="4" height="1" fill="#888" />
<rect x="709" y="42" width="85.6" height="198.5" fill="#ececec" />
<rect x="709" y="42" width="85.6" height="0.8" fill="#fdfdfd" />
<rect x="709" y="53.5" width="85.6" height="0.6" fill="#a8a8a8" />
<path d="M711,53.5 V46.5 H739.5 V53.5" fill="#f2f2f2" stroke="#9a9a9a" stroke-width="0.6"/>
<text x="713.2" y="52.1" font-size="5.2" fill="#1a1a1a" font-weight="normal" text-anchor="start" textLength="26" lengthAdjust="spacingAndGlyphs">Navigator ×</text>
<path d="M740,53.5 V46.5 H767.5 V53.5" fill="#d6d6d6" stroke="#9a9a9a" stroke-width="0.6"/>
<text x="742.2" y="52.1" font-size="5.2" fill="#1a1a1a" font-weight="normal" text-anchor="start" textLength="24" lengthAdjust="spacingAndGlyphs">Histogram</text>
<path d="M768,53.5 V46.5 H779 V53.5" fill="#d6d6d6" stroke="#9a9a9a" stroke-width="0.6"/>
<text x="770.2" y="52.1" font-size="5.2" fill="#1a1a1a" font-weight="normal" text-anchor="start" textLength="9" lengthAdjust="spacingAndGlyphs">Info</text>
<path d="M786,43.5 h3 M791,42.5 l2,2 M793,42.5 l-2,2" stroke="#666" stroke-width="0.6"/>
<path d="M789,50.5 l1.5,1.5 l1.5,-1.5 M791.5,47.5 h2" stroke="#555" stroke-width="0.7" fill="none"/>
<rect x="711.3" y="82.3" width="82.4" height="122.4" fill="#e06878" />
<rect x="712.1" y="83.1" width="80.8" height="120.8" fill="#000" />
<svg x="712" y="83" width="81" height="121" viewBox="247 51 291 435" preserveAspectRatio="none"><use href="#dancer"/></svg>
<path d="M709.5,232.6 H794" stroke="#b8b8b8" stroke-width="0.7" stroke-dasharray="1,0.6"/>
<rect x="709" y="233" width="85.6" height="7.5" fill="#f4f4f4" />
<text x="712" y="239" font-size="5.4" fill="#111" font-weight="normal" text-anchor="start" textLength="14" lengthAdjust="spacingAndGlyphs">65.31%</text>
<path d="M744,239 l1.8,-2.2 l1.2,1.2 l0.8,-0.8 l1.2,1.8 Z" fill="#333"/>
<rect x="750" y="236.7" width="27" height="0.9" fill="#bdbdbd" />
<rect x="759" y="235" width="3" height="4.2" fill="#f8f8f8" stroke="#888" stroke-width="0.5"/>
<path d="M779,239.5 l3,-3.5 l2,2 l1.5,-1.5 l2.5,3 Z" fill="#333"/>
<rect x="709" y="240.5" width="85.6" height="1.6" fill="#575757" />
<rect x="709" y="242.1" width="85.6" height="52.900000000000006" fill="#ececec" />
<rect x="709" y="242.1" width="85.6" height="0.8" fill="#fdfdfd" />
<rect x="709" y="254" width="85.6" height="0.6" fill="#a8a8a8" />
<path d="M711,254 V247 H731.5 V254" fill="#f2f2f2" stroke="#9a9a9a" stroke-width="0.6"/>
<text x="713.2" y="252.6" font-size="5.2" fill="#1a1a1a" font-weight="normal" text-anchor="start" textLength="17" lengthAdjust="spacingAndGlyphs">Color ×</text>
<path d="M732,254 V247 H756.5 V254" fill="#d6d6d6" stroke="#9a9a9a" stroke-width="0.6"/>
<text x="734.2" y="252.6" font-size="5.2" fill="#1a1a1a" font-weight="normal" text-anchor="start" textLength="21" lengthAdjust="spacingAndGlyphs">Swatches</text>
<path d="M757,254 V247 H774 V254" fill="#d6d6d6" stroke="#9a9a9a" stroke-width="0.6"/>
<text x="759.2" y="252.6" font-size="5.2" fill="#1a1a1a" font-weight="normal" text-anchor="start" textLength="14" lengthAdjust="spacingAndGlyphs">Styles</text>
<path d="M786,244 h3 M791,243 l2,2 M793,243 l-2,2" stroke="#666" stroke-width="0.6"/>
<path d="M789,251 l1.5,1.5 l1.5,-1.5 M791.5,248 h2" stroke="#555" stroke-width="0.7" fill="none"/>
<rect x="717.5" y="263" width="8.5" height="8.5" fill="#fff" stroke="#8a8a8a" stroke-width="0.6"/>
<rect x="712" y="257" width="8.5" height="8.5" fill="#000" stroke="#777" stroke-width="0.5"/>
<text x="727" y="262" font-size="4.5" fill="#111" font-weight="normal" text-anchor="start" textLength="4" lengthAdjust="spacingAndGlyphs">K</text>
<linearGradient id="gK" x1="0" x2="1"><stop offset="0" stop-color="#fff"/><stop offset="1" stop-color="#000"/></linearGradient>
<rect x="732.5" y="258.2" width="43" height="3.2" fill="url(#gK)" stroke="#888" stroke-width="0.4"/>
<path d="M774.5,262 l1.5,2.2 h-3 Z" fill="#fff" stroke="#333" stroke-width="0.5"/>
<rect x="778.5" y="257.5" width="9" height="6" fill="#fafafa" />
<text x="779.5" y="262.5" font-size="4.6" fill="#111" font-weight="normal" text-anchor="start" textLength="7" lengthAdjust="spacingAndGlyphs">100</text>
<path d="M790,258.5 l2.5,2 M791.5,258 l1.5,1.5" stroke="#333" stroke-width="0.8"/>
<linearGradient id="gSpec" x1="0" x2="1"><stop offset="0" stop-color="#ff2a1a"/><stop offset="0.16" stop-color="#ffe02a"/><stop offset="0.3" stop-color="#30d030"/><stop offset="0.48" stop-color="#20c8e8"/><stop offset="0.62" stop-color="#2040e0"/><stop offset="0.78" stop-color="#c020c0"/><stop offset="0.92" stop-color="#ff1a3a"/><stop offset="0.95" stop-color="#600"/><stop offset="1" stop-color="#000"/></linearGradient>
<linearGradient id="gSpecV" x1="0" y1="0" x2="0" y2="1"><stop offset="0" stop-color="#fff" stop-opacity="0.35"/><stop offset="0.4" stop-color="#fff" stop-opacity="0"/><stop offset="0.6" stop-color="#000" stop-opacity="0"/><stop offset="1" stop-color="#000" stop-opacity="0.65"/></linearGradient>
<rect x="711" y="287.3" width="82.5" height="5.4" fill="url(#gSpec)" />
<rect x="711" y="287.3" width="82.5" height="5.4" fill="url(#gSpecV)" />
<rect x="709" y="295" width="85.6" height="1.6" fill="#575757" />
<rect x="709" y="296.6" width="85.6" height="198.39999999999998" fill="#ececec" />
<rect x="709" y="296.6" width="85.6" height="0.8" fill="#fdfdfd" />
<rect x="709" y="308.2" width="85.6" height="0.6" fill="#a8a8a8" />
<path d="M711,308.2 V301.2 H732.5 V308.2" fill="#f2f2f2" stroke="#9a9a9a" stroke-width="0.6"/>
<text x="713.2" y="306.8" font-size="5.2" fill="#1a1a1a" font-weight="normal" text-anchor="start" textLength="18" lengthAdjust="spacingAndGlyphs">Layers ×</text>
<path d="M733.5,308.2 V301.2 H757.5 V308.2" fill="#d6d6d6" stroke="#9a9a9a" stroke-width="0.6"/>
<text x="735.7" y="306.8" font-size="5.2" fill="#1a1a1a" font-weight="normal" text-anchor="start" textLength="21" lengthAdjust="spacingAndGlyphs">Channels</text>
<path d="M758.5,308.2 V301.2 H775.5 V308.2" fill="#d6d6d6" stroke="#9a9a9a" stroke-width="0.6"/>
<text x="760.7" y="306.8" font-size="5.2" fill="#1a1a1a" font-weight="normal" text-anchor="start" textLength="13" lengthAdjust="spacingAndGlyphs">Paths</text>
<path d="M786,298.2 h3 M791,297.2 l2,2 M793,297.2 l-2,2" stroke="#666" stroke-width="0.6"/>
<path d="M789,305.2 l1.5,1.5 l1.5,-1.5 M791.5,302.2 h2" stroke="#555" stroke-width="0.7" fill="none"/>
<rect x="711" y="309.5" width="45" height="7" fill="#fafafa" stroke="#c4c4c4" stroke-width="0.5"/>
<path d="M713,313 h3 M713,314.5 h3" stroke="#999" stroke-width="0.6"/>
<path d="M750,312.5 h3.5 l-1.75,2 Z" fill="#111"/>
<text x="757" y="315" font-size="5.2" fill="#1a1a1a" font-weight="normal" text-anchor="start" textLength="15" lengthAdjust="spacingAndGlyphs">Opacity:</text>
<rect x="773.5" y="309.5" width="16" height="7" fill="#fafafa" stroke="#c4c4c4" stroke-width="0.5"/>
<text x="775" y="315" font-size="4.8" fill="#111" font-weight="normal" text-anchor="start" textLength="10" lengthAdjust="spacingAndGlyphs">100%</text>
<rect x="789.8" y="309.8" width="4.5" height="6.5" fill="#e8e8e8" stroke="#9a9a9a" stroke-width="0.5"/>
<path d="M790.8,312.3 h2.4 l-1.2,1.6 Z" fill="#333"/>
<rect x="709" y="318" width="85.6" height="0.5" fill="#cfcfcf" />
<text x="712" y="325" font-size="5.2" fill="#1a1a1a" font-weight="normal" text-anchor="start" textLength="10" lengthAdjust="spacingAndGlyphs">Lock:</text>
<rect x="726" y="320.5" width="5" height="5" fill="#fff" stroke="#555" stroke-width="0.6"/>
<path d="M726.5,321 l4,4 M730.5,321 l-4,4" stroke="#777" stroke-width="0.4"/>
<path d="M733,326 L738,320.5" stroke="#333" stroke-width="1"/>
<path d="M741,323 h5 M743.5,320.5 v5" stroke="#333" stroke-width="0.8"/>
<path d="M748,323 h4 v3 h-4 Z M749,323 v-1.5 a1,1 0 0,1 2,0 v1.5" stroke="#333" stroke-width="0.7" fill="#333"/>
<text x="765" y="325" font-size="5.2" fill="#1a1a1a" font-weight="normal" text-anchor="start" textLength="7" lengthAdjust="spacingAndGlyphs">Fill:</text>
<rect x="773.5" y="319.5" width="16" height="7" fill="#fafafa" stroke="#c4c4c4" stroke-width="0.5"/>
<text x="775" y="325" font-size="4.8" fill="#111" font-weight="normal" text-anchor="start" textLength="10" lengthAdjust="spacingAndGlyphs">100%</text>
<rect x="789.8" y="319.8" width="4.5" height="6.5" fill="#e8e8e8" stroke="#9a9a9a" stroke-width="0.5"/>
<path d="M790.8,322.3 h2.4 l-1.2,1.6 Z" fill="#333"/>
<rect x="709" y="328" width="85.6" height="0.6" fill="#b8b8b8" />
<rect x="710" y="328.6" width="8.5" height="26.6" fill="#efeae2" />
<rect x="718.5" y="328.6" width="71" height="26.6" fill="#3a8fe8" />
<rect x="710" y="355.5" width="80" height="0.6" fill="#c4c4c4" />
<rect x="710" y="381.3" width="80" height="0.6" fill="#c4c4c4" />
<rect x="710" y="407.5" width="80" height="0.6" fill="#c4c4c4" />
<rect x="718" y="356" width="0.6" height="51.5" fill="#cfcfcf" />
<rect x="789.5" y="328.6" width="0.6" height="79" fill="#cfcfcf" />
<path d="M791,331 l1.2,1.2 l1.2,-1.2" stroke="#666" stroke-width="0.5" fill="none"/>
<path d="M711.8,342 q2.5,-2.5 5,0 q-2.5,2.5 -5,0 Z M711.8,394 q2.5,-2.5 5,0 q-2.5,2.5 -5,0 Z" fill="#111"/>
<rect x="719.6999999999999" y="329.4" width="17.2" height="25.2" fill="#8a8a8a" />
<rect x="720.3" y="330" width="16" height="24" fill="#000" />
<svg x="720.3" y="330" width="16" height="24" viewBox="247 51 291 435" preserveAspectRatio="none"><use href="#dancer"/></svg>
<rect x="720.3" y="351" width="16" height="3" fill="#a09a94" />
<rect x="741.6" y="329.2" width="18.6" height="24.2" fill="#000" />
<path d="M743,330.8 H756 V341.4 L754.2,345.3 L743,349.8 Z" fill="#fff"/>
<circle cx="751" cy="333.7" r="2.3" fill="#000"/><circle cx="748.4" cy="334.4" r="1.5" fill="#000"/><circle cx="746.8" cy="331" r="1.1" fill="#000"/><circle cx="747.1" cy="341.7" r="1.3" fill="#000"/>
<text x="762" y="344.6" font-size="5.2" fill="#fff" font-weight="normal" text-anchor="start" textLength="18" lengthAdjust="spacingAndGlyphs">Layer 1</text>
<rect x="719.6999999999999" y="356.4" width="17.2" height="24.7" fill="#8a8a8a" />
<rect x="720.3" y="357" width="16" height="23.5" fill="#000" />
<svg x="720.3" y="357" width="16" height="23.5" viewBox="247 51 291 435" preserveAspectRatio="none"><use href="#dancer"/></svg>
<rect x="720.3" y="377.5" width="16" height="3" fill="#a09a94" />
<text x="740" y="371" font-size="5.2" fill="#111" font-weight="normal" text-anchor="start" textLength="17" lengthAdjust="spacingAndGlyphs">Layer 0</text>
<rect x="719.6999999999999" y="382.9" width="17.2" height="24.2" fill="#8a8a8a" />
<rect x="720.3" y="383.5" width="16" height="23" fill="#000" />
<text x="740" y="397" font-size="5.2" fill="#111" font-weight="normal" text-anchor="start" textLength="17" lengthAdjust="spacingAndGlyphs">Layer 2</text>
<rect x="709" y="484.5" width="85.6" height="0.6" fill="#c8c8c8" />
<path d="M712,490 h3 M716,490 h3 M712.5,489 v2 M718.5,489 v2" stroke="#555" stroke-width="0.8"/>
<text x="725" y="492.5" font-size="5.5" fill="#333" font-weight="bold" text-anchor="start" textLength="6" lengthAdjust="spacingAndGlyphs">fx</text>
<rect x="736.5" y="487.5" width="5.5" height="5.5" fill="#2a4a9a" />
<rect x="738" y="489" width="2.5" height="2.5" fill="#fff" />
<circle cx="751" cy="490.5" r="2.7" fill="#222"/><path d="M749,492 l4,-4" stroke="#fff" stroke-width="0.8"/>
<path d="M759,489 h2 l1,1 h3 v3 h-6 Z" fill="none" stroke="#444" stroke-width="0.8"/>
<path d="M770,488 h4 l2,2 v3 h-6 Z" fill="none" stroke="#444" stroke-width="0.8"/>
<path d="M782,488.5 h5 M783,489 v4.5 h3 v-4.5" fill="#555" stroke="#333" stroke-width="0.8"/>
<path d="M791,493 l2.5,-2.5 M792.5,493 l1,-1" stroke="#888" stroke-width="0.5"/>
<rect x="707" y="495" width="93" height="3" fill="#565656" />
<g fill="none" stroke="#ec1018" stroke-linecap="round" stroke-linejoin="round">
<ellipse cx="11" cy="129" rx="11" ry="7.3" stroke-width="2.8"/>
<ellipse cx="10.6" cy="278.5" rx="10.8" ry="11.3" stroke-width="3"/>
<path d="M508.5,359.5 C510.8,358.8 517.2,356.7 522.0,355.0 C526.8,353.3 531.8,352.5 537.5,349.4 C543.2,346.3 549.4,340.5 556.3,336.3 C563.2,332.1 571.9,327.3 578.8,324.0 C585.7,320.7 591.4,318.9 597.6,316.6 C603.9,314.3 610.1,312.0 616.3,310.0 C622.5,308.0 629.4,305.7 635.0,304.4 C640.6,303.1 643.8,302.6 650.0,302.1 C656.2,301.7 665.3,301.4 672.0,301.7 C678.7,302.0 684.7,302.9 690.0,304.0 C695.3,305.1 699.8,306.7 704.0,308.0 C708.2,309.3 710.8,310.3 715.0,311.9 C719.2,313.5 724.9,315.8 729.0,317.5 C733.1,319.2 737.1,321.0 739.6,322.4 C742.1,323.8 743.3,325.4 744.0,326.0" stroke-width="2.9"/>
<path d="M744.0,326.0 C744.8,325.3 746.6,322.5 748.6,322.0 C750.6,321.5 753.8,322.5 756.0,323.0 C758.2,323.5 760.4,323.8 762.0,325.0 C763.6,326.2 764.8,327.8 765.6,330.0 C766.5,332.2 767.1,335.2 767.1,338.0 C767.1,340.8 766.5,344.3 765.6,347.0 C764.8,349.7 763.4,352.1 762.0,354.0 C760.6,355.9 758.8,357.3 757.0,358.2 C755.2,359.1 753.0,359.5 751.0,359.2 C749.0,358.9 746.8,357.7 745.0,356.2 C743.2,354.7 741.2,352.5 740.0,350.1 C738.8,347.8 737.8,344.8 737.5,342.1 C737.2,339.4 737.4,336.5 738.0,334.1 C738.6,331.8 739.8,329.5 741.0,328.0 C742.2,326.5 744.3,325.5 745.0,325.0" stroke-width="2.9"/>
<path d="M516.5,348 L508.5,359.5 L521.6,367.2" stroke-width="3"/>
<path d="M707.3,341.8 C705.9,344.3 702.3,350.5 698.9,357.0 C695.5,363.5 689.8,372.9 687.0,380.7 C684.2,388.5 682.6,395.6 682.0,404.0 C681.4,412.4 681.6,422.8 683.6,431.0 C685.6,439.2 689.8,446.8 693.8,453.0 C697.8,459.2 703.5,463.9 707.9,468.0 C712.3,472.1 716.1,474.9 720.0,477.7 C723.9,480.5 729.3,482.5 731.5,484.7 C733.7,486.9 732.6,488.6 733.0,491.0 C733.4,493.4 733.8,497.7 734.0,499.0" stroke-width="2.4"/>
<path d="M687.4,338.6 L707.3,341.8" stroke-width="2.9"/>
<path d="M731.5,486.0 C732.5,485.1 735.3,480.5 737.6,480.8 C739.9,481.1 743.8,485.0 745.5,488.0 C747.2,491.0 747.6,497.2 748.0,499.0" stroke-width="2.6"/>
</g></svg></body></html>
